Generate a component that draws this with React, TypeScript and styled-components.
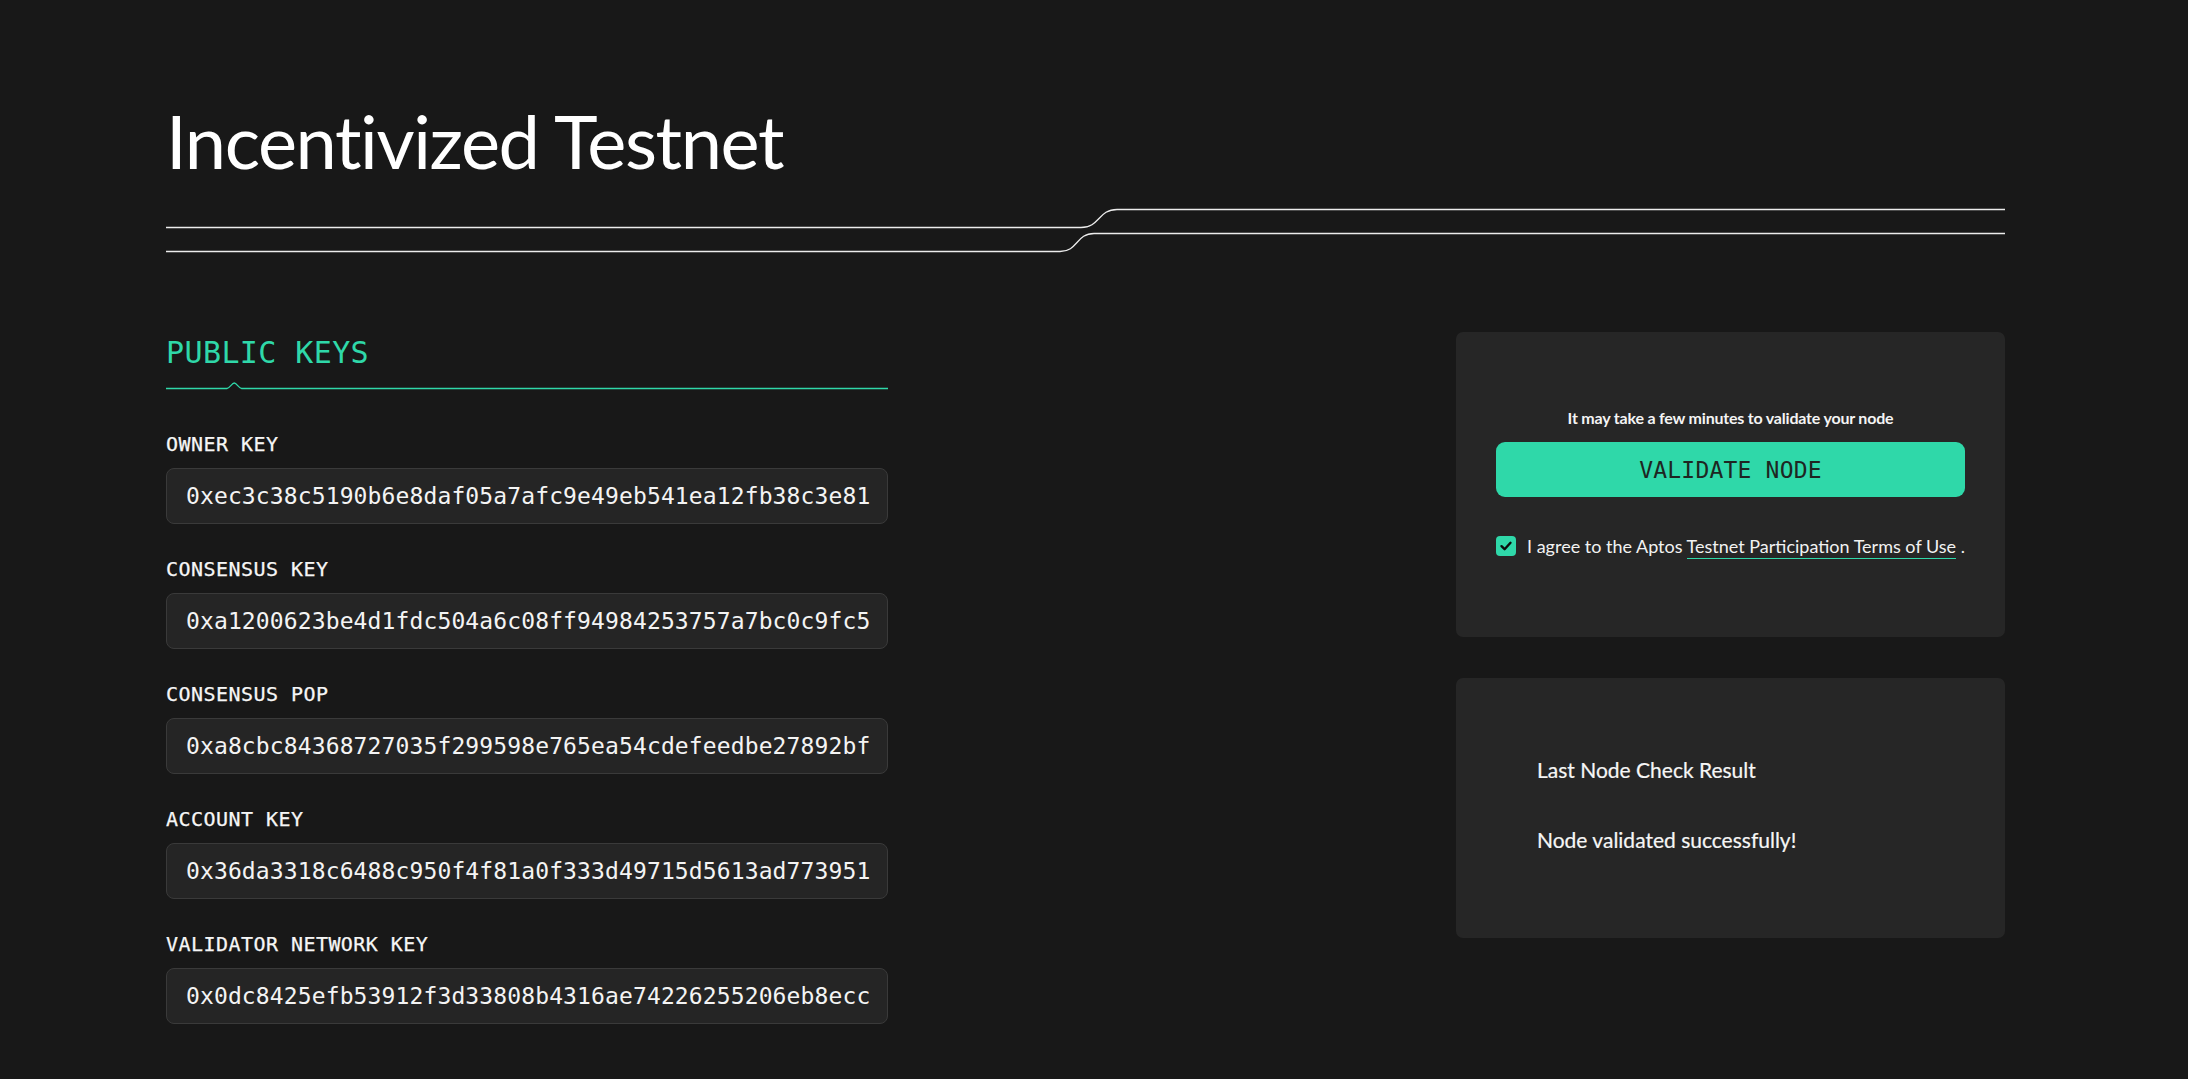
import React from "react";
import styled, { createGlobalStyle } from "styled-components";

const GlobalStyle = createGlobalStyle`
  html, body {
    margin: 0;
    padding: 0;
    background: #181818;
  }
  body {
    font-family: "Lato", "Noto Sans", sans-serif;
    color: #f2f2f2;
  }
  * { box-sizing: border-box; }
`;

const GREEN = "#2fd8a9";
const MONO = `"DejaVu Sans Mono", "Liberation Mono", monospace`;

const Page = styled.main`
  padding: 104px 183px 40px 166px;
  min-height: 1079px;
`;

const Title = styled.h1`
  margin: 0;
  font-family: "Lato", sans-serif;
  font-weight: 400;
  font-size: 74px;
  line-height: 1;
  color: #ffffff;
  letter-spacing: -1.4px;
`;

const DividerSvg = styled.svg`
  display: block;
  margin-top: 29px;
  width: 100%;
  height: 46px;
`;

const Content = styled.section`
  display: grid;
  grid-template-columns: 722px 1fr 549px;
  margin-top: 79px;
`;

const KeysColumn = styled.div`
  grid-column: 1;
  padding-top: 6px;
  display: flex;
  flex-direction: column;
`;

const SectionHeading = styled.h2`
  margin: 0;
  font-family: ${MONO};
  font-weight: 400;
  font-size: 30px;
  line-height: 30px;
  letter-spacing: 0.4px;
  color: ${GREEN};
`;

const HeadingRule = styled.svg`
  display: block;
  margin-top: 14px;
  width: 100%;
  height: 8px;
`;

const FieldList = styled.div`
  margin-top: 44px;
  display: flex;
  flex-direction: column;
  gap: 35px;
`;

const Field = styled.div`
  display: flex;
  flex-direction: column;
  gap: 14px;
`;

const FieldLabel = styled.label`
  font-family: ${MONO};
  font-size: 20px;
  line-height: 20px;
  letter-spacing: 0.45px;
  color: #f6f6f6;
  -webkit-text-stroke: 0.25px #f6f6f6;
`;

const KeyBox = styled.div`
  height: 56px;
  display: flex;
  align-items: center;
  padding: 0 19px;
  background: #252525;
  border: 1px solid #3a3a3a;
  border-radius: 8px;
  overflow: hidden;
  white-space: nowrap;
  font-family: ${MONO};
  font-size: 23px;
  letter-spacing: 0.12px;
  color: #f4f4f4;
`;

const SideColumn = styled.div`
  grid-column: 3;
  display: flex;
  flex-direction: column;
  gap: 41px;
`;

const Card = styled.div<{ $height: number }>`
  height: ${(p) => p.$height}px;
  background: #262626;
  border-radius: 7px;
`;

const ValidateCard = styled(Card)`
  display: flex;
  flex-direction: column;
  align-items: center;
  justify-content: center;
  padding: 0 40px 3px;
`;

const Hint = styled.p`
  margin: 0;
  font-family: "Lato", sans-serif;
  font-weight: 700;
  font-size: 16px;
  line-height: 18px;
  letter-spacing: -0.2px;
  color: #f4f4f4;
`;

const ValidateButton = styled.button`
  margin-top: 15px;
  width: 100%;
  height: 55px;
  border: none;
  border-radius: 9px;
  background: ${GREEN};
  color: #1e2622;
  font-family: ${MONO};
  font-size: 23px;
  letter-spacing: 0.2px;
  cursor: pointer;
`;

const AgreeRow = styled.label`
  margin-top: 38px;
  align-self: stretch;
  display: flex;
  align-items: center;
  gap: 11px;
  font-family: "Lato", sans-serif;
  font-size: 18px;
  color: #f2f2f2;
`;

const CheckBox = styled.span`
  flex: none;
  width: 20px;
  height: 20px;
  border-radius: 4px;
  background: ${GREEN};
  display: flex;
  align-items: center;
  justify-content: center;
`;

const TermsLink = styled.a`
  color: #f2f2f2;
  text-decoration: none;
  border-bottom: 1px solid ${GREEN};
  padding-bottom: 1px;
`;

const ResultCard = styled(Card)`
  padding: 81px 81px 0;
  display: flex;
  flex-direction: column;
  gap: 49px;
`;

const ResultText = styled.p`
  margin: 0;
  font-family: "Lato", sans-serif;
  font-size: 21px;
  line-height: 21px;
  color: #f6f6f6;
  -webkit-text-stroke: 0.2px #f6f6f6;
`;

const keys = [
  { label: "OWNER KEY", value: "0xec3c38c5190b6e8daf05a7afc9e49eb541ea12fb38c3e81" },
  { label: "CONSENSUS KEY", value: "0xa1200623be4d1fdc504a6c08ff94984253757a7bc0c9fc5" },
  { label: "CONSENSUS POP", value: "0xa8cbc84368727035f299598e765ea54cdefeedbe27892bf" },
  { label: "ACCOUNT KEY", value: "0x36da3318c6488c950f4f81a0f333d49715d5613ad773951" },
  { label: "VALIDATOR NETWORK KEY", value: "0x0dc8425efb53912f3d33808b4316ae74226255206eb8ecc" },
];

export default function App() {
  return (
    <>
      <GlobalStyle />
      <Page>
        <Title>Incentivized Testnet</Title>
        <DividerSvg viewBox="0 0 1839 46" preserveAspectRatio="none">
          <path
            d="M0 20.5 H915 C934 20.5 932 2.5 951 2.5 H1839"
            fill="none"
            stroke="#ececec"
            strokeWidth="1.3"
          />
          <path
            d="M0 44.5 H894 C912 44.5 910 26.5 928 26.5 H1839"
            fill="none"
            stroke="#ececec"
            strokeWidth="1.3"
          />
        </DividerSvg>
        <Content>
          <KeysColumn>
            <SectionHeading>PUBLIC KEYS</SectionHeading>
            <HeadingRule viewBox="0 0 722 8" preserveAspectRatio="none">
              <path
                d="M0 6.5 H61 C63.5 6.5 66 1 68.3 1 C70.6 1 73 6.5 75.6 6.5 H722"
                fill="none"
                stroke={GREEN}
                strokeWidth="1.3"
              />
            </HeadingRule>
            <FieldList>
              {keys.map((k) => (
                <Field key={k.label}>
                  <FieldLabel>{k.label}</FieldLabel>
                  <KeyBox>{k.value}</KeyBox>
                </Field>
              ))}
            </FieldList>
          </KeysColumn>
          <SideColumn>
            <ValidateCard $height={305}>
              <Hint>It may take a few minutes to validate your node</Hint>
              <ValidateButton>VALIDATE NODE</ValidateButton>
              <AgreeRow>
                <CheckBox>
                  <svg width="14" height="14" viewBox="0 0 14 14">
                    <path
                      d="M2.5 7.2 L5.6 10.2 L11.5 3.8"
                      fill="none"
                      stroke="#0d0d0d"
                      strokeWidth="2.4"
                      strokeLinecap="round"
                      strokeLinejoin="round"
                    />
                  </svg>
                </CheckBox>
                <span>
                  I agree to the Aptos <TermsLink href="#">Testnet Participation Terms of Use</TermsLink> .
                </span>
              </AgreeRow>
            </ValidateCard>
            <ResultCard $height={260}>
              <ResultText>Last Node Check Result</ResultText>
              <ResultText>Node validated successfully!</ResultText>
            </ResultCard>
          </SideColumn>
        </Content>
      </Page>
    </>
  );
}
